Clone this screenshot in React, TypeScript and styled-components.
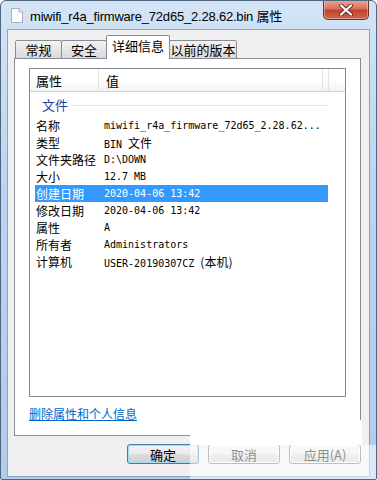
import type { ReactNode } from "react";
import styled, { createGlobalStyle } from "styled-components";

const GlobalStyle = createGlobalStyle`
    html, body {
        margin: 0;
        padding: 0;
        background: #ffffff;
    }
    * {
        box-sizing: border-box;
    }
`;

const CJK = `"Noto Sans CJK SC", "Noto Sans", sans-serif`;

type Row = { label: string; value: ReactNode; selected?: boolean };

const tabs = [
    { name: "常规", width: 47 },
    { name: "安全", width: 46 },
    { name: "详细信息", width: 64, active: true },
    { name: "以前的版本", width: 68 },
];

function FileIcon() {
    return (
        <svg width="12" height="15" viewBox="0 0 12 15">
            <path d="M0.5 0.5 H8 L11.5 4 V14.5 H0.5 Z" fill="#ffffff" stroke="#a8adb5" />
            <path d="M8 0.5 V4 H11.5" fill="#eef0f3" stroke="#a8adb5" />
        </svg>
    );
}

function CloseGlyph() {
    return (
        <svg width="14" height="12" viewBox="0 0 14 12">
            <path d="M2 1.5 L12 10.5 M12 1.5 L2 10.5" stroke="#6b2a20" strokeWidth="4" strokeLinecap="round" />
            <path d="M2 1.5 L12 10.5 M12 1.5 L2 10.5" stroke="#ffffff" strokeWidth="2.2" strokeLinecap="round" />
        </svg>
    );
}

function App() {
    const rows: Row[] = [
        { label: "名称", value: "miwifi_r4a_firmware_72d65_2.28.62..." },
        { label: "类型", value: <>BIN <Wide>文件</Wide></> },
        { label: "文件夹路径", value: "D:\\DOWN" },
        { label: "大小", value: "12.7 MB" },
        { label: "创建日期", value: "2020-04-06 13:42", selected: true },
        { label: "修改日期", value: "2020-04-06 13:42" },
        { label: "属性", value: "A" },
        { label: "所有者", value: "Administrators" },
        { label: "计算机", value: <>USER-20190307CZ <Wide>(本机)</Wide></> },
    ];

    return (
        <>
            <GlobalStyle />
            <Window>
                <TitleBar>
                    <FileIcon />
                    <Title>miwifi_r4a_firmware_72d65_2.28.62.bin 属性</Title>
                    <CloseButton>
                        <CloseGlyph />
                    </CloseButton>
                </TitleBar>
                <Body>
                    <TabStrip>
                        {tabs.map((t) => (
                            <Tab key={t.name} $width={t.width} $active={!!t.active}>
                                {t.name}
                            </Tab>
                        ))}
                    </TabStrip>
                    <Panel>
                        <ListBox>
                            <HeaderRow>
                                <HeaderCell $width={69} $pad={6}>属性</HeaderCell>
                                <HeaderCell $width={224} $pad={7}>值</HeaderCell>
                                <HeaderCell $width={6} $pad={0} />
                                <HeaderFill />
                            </HeaderRow>
                            <GroupRow>
                                <GroupTitle>文件</GroupTitle>
                                <GroupLine />
                            </GroupRow>
                            {rows.map((r) => (
                                <DataRow key={r.label} $selected={!!r.selected}>
                                    <Label>{r.label}</Label>
                                    <Value>{r.value}</Value>
                                </DataRow>
                            ))}
                        </ListBox>
                        <RemoveLink href="#">删除属性和个人信息</RemoveLink>
                    </Panel>
                    <ButtonRow>
                        <Button $default>确定</Button>
                        <Button>取消</Button>
                        <Button>应用(A)</Button>
                    </ButtonRow>
                </Body>
                <Watermark />
                <WatermarkFade />
            </Window>
        </>
    );
}

export default App;

const Window = styled.div`
    position: relative;
    width: 377px;
    height: 480px;
    display: flex;
    flex-direction: column;
    background: linear-gradient(to bottom, #d3e4f6 0%, #bcd4ee 40%, #b1cbe9 100%);
    border: 1px solid #4f6580;
    border-radius: 6px 6px 2px 2px;
    overflow: hidden;
`;

const TitleBar = styled.div`
    height: 28px;
    display: flex;
    align-items: center;
    padding-left: 10px;
    gap: 7px;
    flex-shrink: 0;
`;

const Title = styled.span`
    font-family: "Liberation Sans", ${CJK};
    font-size: 13px;
    letter-spacing: -0.2px;
    color: #000000;
    flex: 1;
    margin-top: 1px;
`;

const CloseButton = styled.div`
    align-self: flex-start;
    width: 46px;
    height: 20px;
    margin-right: 7px;
    margin-top: -1px;
    display: flex;
    align-items: center;
    justify-content: center;
    border: 1px solid #6b2f26;
    border-top: none;
    border-radius: 0 0 5px 5px;
    background: linear-gradient(to bottom, #e9a99b 0%, #d8725f 45%, #c2412b 55%, #d0684e 100%);
    box-shadow: inset 0 0 0 1px rgba(255, 255, 255, 0.35);
`;

const Body = styled.div`
    flex: 1;
    margin: 0 6px 2px 6px;
    display: flex;
    flex-direction: column;
    padding: 6px 8px 0 6px;
    background: #f0f0f0;
    border: 1px solid #8ca2bf;
`;

const TabStrip = styled.div`
    display: flex;
    align-items: flex-end;
    height: 23px;
    margin-left: 2px;
    margin-bottom: -1px;
    position: relative;
    z-index: 1;
`;

const Tab = styled.div<{ $width: number; $active: boolean }>`
    width: ${(p) => p.$width}px;
    height: ${(p) => (p.$active ? 24 : 19)}px;
    display: flex;
    align-items: center;
    justify-content: center;
    padding-bottom: ${(p) => (p.$active ? 5 : 0)}px;
    font-family: ${CJK};
    font-size: 13px;
    color: #000000;
    border: 1px solid #898c95;
    border-bottom: ${(p) => (p.$active ? "none" : "1px solid #898c95")};
    margin-left: -1px;
    border-radius: 2px 2px 0 0;
    background: ${(p) =>
        p.$active ? "#ffffff" : "linear-gradient(to bottom, #f3f3f3 0%, #e6e6e6 50%, #d9d9d9 100%)"};
    z-index: ${(p) => (p.$active ? 2 : 1)};
`;

const Panel = styled.div`
    height: 378px;
    display: flex;
    flex-direction: column;
    background: #ffffff;
    border: 1px solid #898c95;
    padding: 9px 14px 0 14px;
`;

const ListBox = styled.div`
    height: 329px;
    border: 1px solid #828790;
    background: #ffffff;
    display: flex;
    flex-direction: column;
`;

const HeaderRow = styled.div`
    height: 23px;
    flex-shrink: 0;
    display: flex;
    background: linear-gradient(to bottom, #ffffff 0%, #ffffff 50%, #f1f2f4 100%);
    border-bottom: 1px solid #d5d5d5;
`;

const HeaderCell = styled.div<{ $width: number; $pad: number }>`
    width: ${(p) => p.$width}px;
    padding-left: ${(p) => p.$pad}px;
    display: flex;
    align-items: center;
    font-family: ${CJK};
    font-size: 13px;
    color: #000000;
    border-right: 1px solid #e2e3e5;
`;

const HeaderFill = styled.div`
    flex: 1;
`;

const GroupRow = styled.div`
    height: 25px;
    flex-shrink: 0;
    display: flex;
    align-items: center;
    padding-left: 12px;
    gap: 4px;
    padding-right: 18px;
`;

const GroupTitle = styled.span`
    font-family: ${CJK};
    font-size: 13px;
    line-height: 16px;
    color: #1e3f9a;
`;

const GroupLine = styled.div`
    flex: 1;
    height: 1px;
    background: #e2e6ec;
    margin-top: 1px;
`;

const DataRow = styled.div<{ $selected: boolean }>`
    height: 17px;
    flex-shrink: 0;
    width: 293px;
    margin-left: 5px;
    display: flex;
    align-items: center;
    line-height: 17px;
    overflow: hidden;
    background: ${(p) => (p.$selected ? "#3399ff" : "transparent")};
    color: ${(p) => (p.$selected ? "#ffffff" : "#000000")};
`;

const Label = styled.span`
    width: 69px;
    height: 17px;
    padding-left: 1px;
    font-family: ${CJK};
    font-size: 12px;
    line-height: 17px;
    white-space: nowrap;
`;

const Value = styled.span`
    height: 17px;
    font-family: "DejaVu Sans Mono", "Liberation Mono", monospace;
    font-size: 10px;
    line-height: 17px;
    white-space: nowrap;
`;

const Wide = styled.span`
    font-family: ${CJK};
    font-size: 12px;
    line-height: 17px;
`;

const RemoveLink = styled.a`
    margin-top: 9px;
    align-self: flex-start;
    font-family: ${CJK};
    font-size: 12px;
    line-height: 16px;
    color: #0066cc;
    text-decoration: underline;
`;

const ButtonRow = styled.div`
    display: flex;
    justify-content: flex-end;
    gap: 9px;
    margin-top: 8px;
`;

const Button = styled.div<{ $default?: boolean }>`
    width: 72px;
    height: 20px;
    display: flex;
    align-items: center;
    justify-content: center;
    font-family: ${CJK};
    font-size: 13px;
    color: #000000;
    border: 1px solid ${(p) => (p.$default ? "#3c7fb1" : "#707070")};
    border-radius: 3px;
    background: linear-gradient(to bottom, #f2f2f2 0%, #ebebeb 50%, #dddddd 51%, #cfcfcf 100%);
    box-shadow: ${(p) => (p.$default ? "inset 0 0 0 1px #a6d9f4" : "inset 0 0 0 1px #fcfcfc")};
`;

const Watermark = styled.div`
    position: absolute;
    left: 189px;
    top: 419px;
    width: 172px;
    height: 25px;
    background: #ffffff;
`;

const WatermarkFade = styled.div`
    position: absolute;
    left: 189px;
    top: 444px;
    width: 188px;
    height: 36px;
    background: rgba(255, 255, 255, 0.55);
`;
